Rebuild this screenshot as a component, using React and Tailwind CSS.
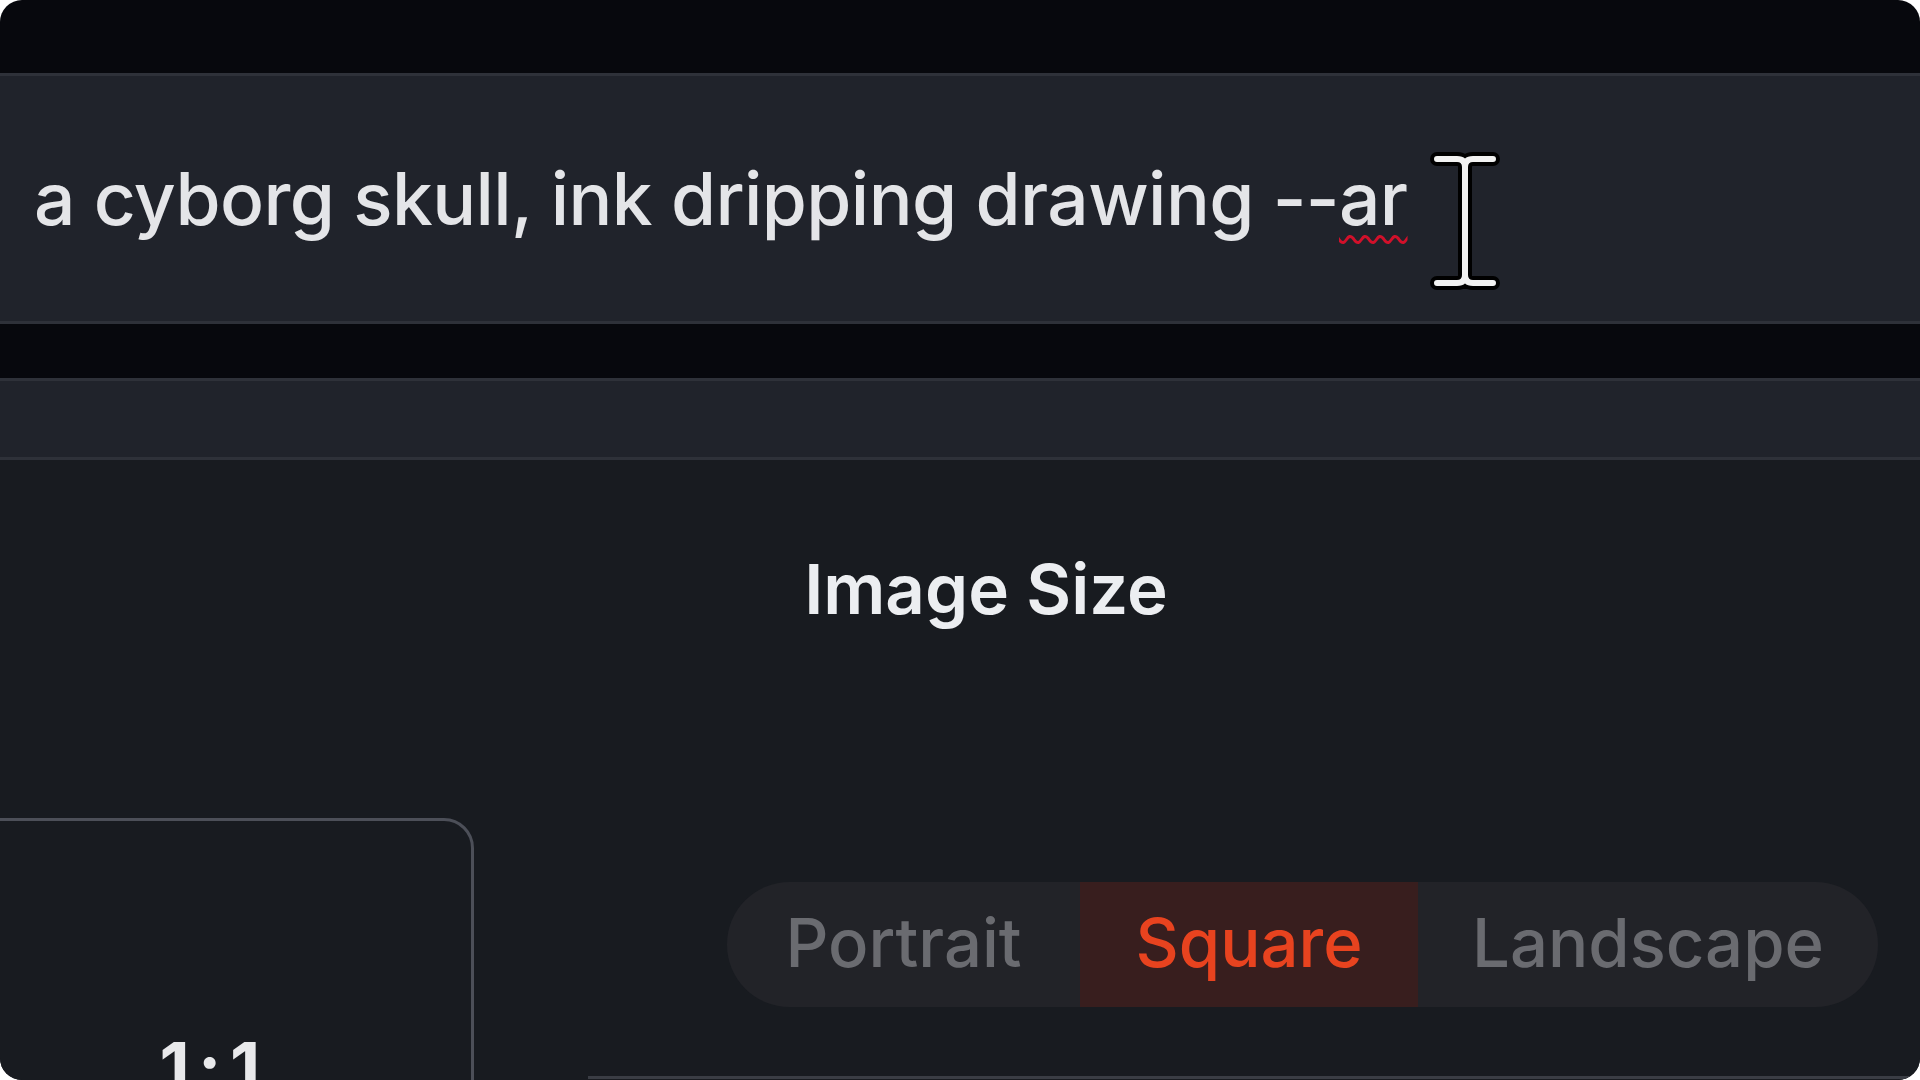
import React from "react";

const font = { fontFamily: "Inter, 'Noto Sans', sans-serif" };

function IBeam() {
  const d = "M7 9 H27 Q35 9 35 17 Q35 9 43 9 H63 M35 17 V125 M7 133 H27 Q35 133 35 125 Q35 133 43 133 H63";
  return (
    <svg width="70" height="142" viewBox="0 0 70 142" className="ml-[22px] mt-[44px] shrink-0">
      <g fill="none" strokeLinecap="round" strokeLinejoin="round">
        <path d={d} stroke="#000" strokeWidth="14" />
        <path d={d} stroke="#f2f2f2" strokeWidth="6" />
      </g>
    </svg>
  );
}

function Segmented() {
  return (
    <div className="flex h-[125px] w-[1151px] items-stretch overflow-hidden rounded-full bg-[#222328] pb-[4px] text-[67px] font-medium leading-none">
      <div className="flex w-[353px] items-center justify-center text-[#6a6b70]">Portrait</div>
      <div className="-mb-[4px] flex w-[338px] items-center justify-center bg-[#381e1e] pb-[4px] text-[#e8431f]">Square</div>
      <div className="flex flex-1 items-center justify-center text-[#6a6b70]">Landscape</div>
    </div>
  );
}

export default function App() {
  return (
    <div className="h-[1080px] w-[1920px] bg-white" style={font}>
      <div className="flex h-full flex-col overflow-hidden rounded-[22px] bg-[#07080d]">
        <div className="h-[73px] shrink-0" />

        <div className="flex h-[251px] shrink-0 items-center border-y-[3px] border-[#2e3139] bg-[#20232b] pl-[34px]">
          <div className="whitespace-nowrap text-[73px] font-medium leading-none tracking-[-0.6px] text-[#e4e5e8]">
            a cyborg skull, ink dripping drawing --
            <span className="underline decoration-[#d2102a] decoration-wavy decoration-[3px] underline-offset-[10px]">ar</span>
          </div>
          <IBeam />
        </div>

        <div className="h-[54px] shrink-0" />

        <div className="h-[82px] shrink-0 border-y-[3px] border-[#2e3139] bg-[#20232b]" />

        <div className="flex flex-1 flex-col bg-[#181b20]">
          <div className="mt-[95px] pl-[52px] text-center text-[69px] font-semibold leading-none text-[#eceef1]">Image Size</div>

          <div className="mt-[194px] flex">
            <div className="ml-[-46px] h-[400px] w-[520px] shrink-0 rounded-tr-[30px] border-[3px] border-[#4c4f58] pt-[212px] text-center text-[70px] font-bold leading-none tracking-[0.12em] text-[#e8e9eb]">
              1:1
            </div>
            <div className="ml-[114px] flex flex-1 flex-col">
              <div className="ml-[139px] mt-[64px]">
                <Segmented />
              </div>
              <div className="mt-[69px] border-t-[3px] border-[#3a3d44]" />
            </div>
          </div>
        </div>
      </div>
    </div>
  );
}
